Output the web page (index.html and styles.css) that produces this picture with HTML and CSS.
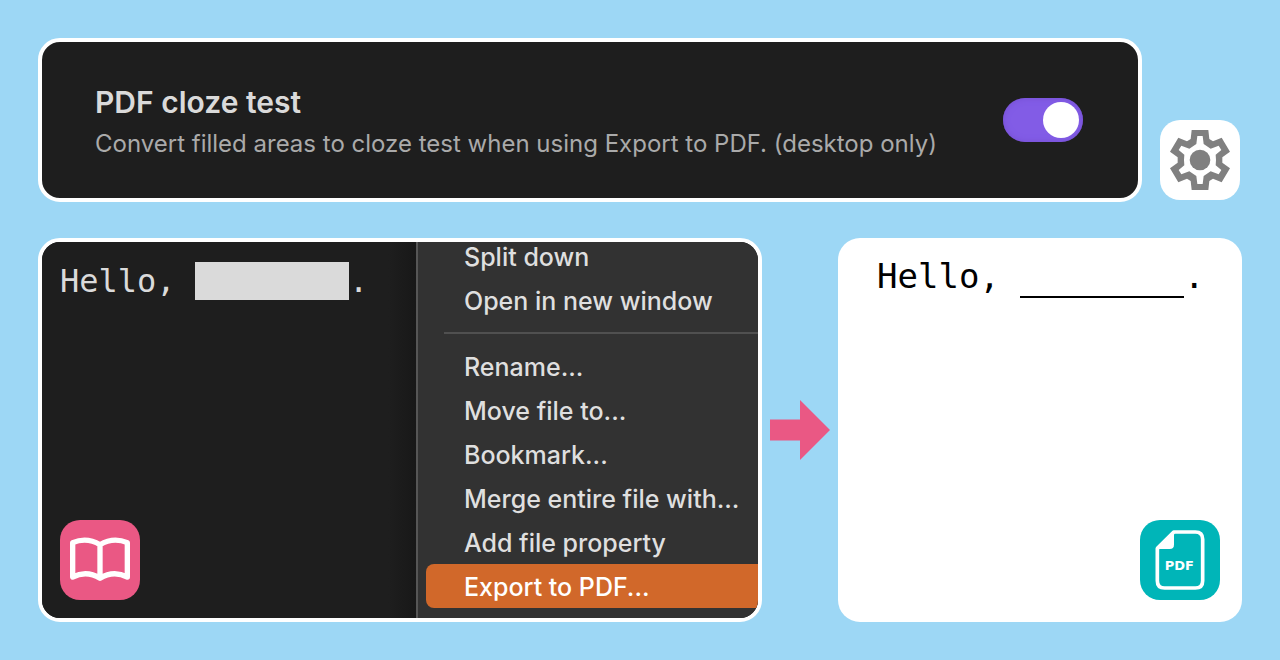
FILE: index.html
```html
<!DOCTYPE html>
<html lang="en">
<head>
<meta charset="utf-8">
<meta name="viewport" content="width=device-width, initial-scale=1">
<title>PDF cloze test</title>
<link rel="stylesheet" href="styles.css">
</head>
<body class="page">
<section class="settings-row">
  <div class="card setting">
    <div class="setting-text">
      <label class="setting-title" for="cloze">PDF cloze test</label>
      <p class="setting-desc" id="cloze-desc">Convert filled areas to cloze test when using Export to PDF. (desktop only)</p>
    </div>
    <input class="toggle" type="checkbox" role="switch" id="cloze" aria-describedby="cloze-desc" checked>
  </div>
  <div class="tile tile-gear">
    <svg class="icon" viewBox="30 30 240 240" aria-hidden="true">
      <path fill="#808080" fill-rule="evenodd" d="M125 60H175L178 87L189 94L215 83L240 125L217 142V158L240 175L215 217L189 206L178 213L175 240H125L122 213L111 206L85 217L60 175L83 158V142L60 125L85 83L111 94L122 87ZM142 78L139 102L118 116L94 107L86 120L103 134Q101 150 103 166L86 180L94 193L118 184L139 198L142 222H158L161 198L182 184L206 193L214 180L197 166Q199 150 197 134L214 120L206 107L182 116L161 102L158 78Z"/>
      <circle cx="150" cy="150" r="31" fill="#808080"/>
    </svg>
  </div>
</section>
<main class="flow">
  <section class="card workspace">
    <div class="editor">
      <p class="note">Hello, <span class="filled">________</span>.</p>
      <div class="tile tile-book">
        <svg class="icon" viewBox="60 60 240 240" aria-hidden="true">
          <path fill="none" stroke="#fff" stroke-width="16" stroke-linejoin="round" d="M98 128Q140 110 180 134Q220 110 262 128V231Q220 210 180 235Q140 210 98 231ZM180 134V235"/>
        </svg>
      </div>
    </div>
    <div class="menu">
      <button class="menu-item menu-item-first" type="button">Split down</button>
      <button class="menu-item" type="button">Open in new window</button>
      <hr class="menu-line">
      <button class="menu-item" type="button">Rename...</button>
      <button class="menu-item" type="button">Move file to...</button>
      <button class="menu-item" type="button">Bookmark...</button>
      <button class="menu-item" type="button">Merge entire file with...</button>
      <button class="menu-item" type="button">Add file property</button>
      <button class="menu-item menu-item-active" type="button">Export to PDF...</button>
    </div>
  </section>
  <svg class="arrow" viewBox="0 0 60 60" aria-hidden="true"><path fill="#ea5884" d="M0 19.500H30V0L60 30L30 60V40.500H0Z"/></svg>
  <section class="output">
    <p class="note note-print">Hello, <span class="blank">________</span>.</p>
    <div class="tile tile-pdf">
      <svg class="icon" viewBox="60 60 240 240" aria-hidden="true">
        <path fill="none" stroke="#fff" stroke-width="11" stroke-linejoin="round" d="M162 96H226Q248 96 248 118V242Q248 264 226 264H134Q112 264 112 242V146Z"/>
        <path fill="#fff" d="M108 142L158 92H162V134Q162 147 149 147H108Z"/>
        <text class="pdf-word" x="178" y="210" text-anchor="middle">PDF</text>
      </svg>
    </div>
  </section>
</main>
</body>
</html>
```
FILE: styles.css
```css
* { box-sizing: border-box; }

.page {
  margin: 0;
  min-height: 100vh;
  padding: 38px;
  display: flex;
  flex-direction: column;
  gap: 36px;
  background: #9dd7f5;
  font-family: Inter, "Liberation Sans", sans-serif;
}

.card {
  border: 4px solid #fff;
  border-radius: 22px;
  background: #1e1e1e;
  overflow: hidden;
}

.settings-row {
  display: flex;
  align-items: flex-end;
  gap: 18px;
  padding-right: 2px;
}

.setting {
  flex: 1;
  display: flex;
  align-items: center;
  justify-content: space-between;
  gap: 32px;
  padding: 40px 55px 36px 53px;
}

.setting-title {
  display: block;
  color: #dadada;
  font-size: 30px;
  font-weight: 600;
  line-height: 40px;
}

.setting-desc {
  margin: 4px 0 0;
  color: #aaa;
  font-size: 24px;
  line-height: 36px;
}

.toggle {
  appearance: none;
  flex: none;
  display: flex;
  justify-content: flex-end;
  width: 80px;
  height: 44px;
  margin: 0 0 4px;
  padding: 4px;
  border-radius: 22px;
  background: #825ce6;
  box-shadow: inset 0 0 6px #754fd2;
}

.toggle::before {
  content: "";
  width: 36px;
  height: 36px;
  border-radius: 50%;
  background: #fff;
}

.tile {
  flex: none;
  width: 80px;
  height: 80px;
  border-radius: 20px;
}

.icon { display: block; width: 100%; height: 100%; }

.tile-gear { background: #fff; margin-bottom: 2px; }
.tile-book { background: #ea5884; }
.tile-pdf { background: #00b5b8; align-self: flex-end; }

.pdf-word {
  fill: #fff;
  font-family: "DejaVu Sans", sans-serif;
  font-size: 39px;
  font-weight: 700;
}

.flow {
  flex: 1;
  display: grid;
  grid-template-columns: 724fr 60px 404fr;
  gap: 8px;
  align-items: stretch;
}

.workspace {
  display: grid;
  grid-template-columns: 374fr 342fr;
}

.editor {
  display: flex;
  flex-direction: column;
  justify-content: space-between;
  padding: 20px 18px 18px;
  background: linear-gradient(to left, #181818, #1e1e1e 28px);
}

.note {
  margin: 0;
  color: #dadada;
  font-family: "DejaVu Sans Mono", monospace;
  font-size: 32px;
  line-height: 38px;
  white-space: nowrap;
}

.filled { background: #dadada; color: transparent; }

.menu {
  display: flex;
  flex-direction: column;
  padding: 0 0 10px 8px;
  border-left: 2px solid #565656;
  background: #323232;
}

.menu-item {
  padding: 2px 0 0 38px;
  border: 0;
  border-radius: 8px 0 0 8px;
  background: none;
  color: #dfdfdf;
  font-family: inherit;
  font-size: 25px;
  font-weight: 500;
  line-height: 42px;
  text-align: left;
  white-space: nowrap;
}

.menu-item-first {
  padding-top: 0;
  padding-bottom: 6px;
  line-height: 30px;
}

.menu-item-active { background: #d1682a; color: #fff; }

.menu-line {
  width: auto;
  height: 2px;
  margin: 10px 0 10px 18px;
  border: 0;
  background: #505050;
}

.arrow { align-self: center; width: 60px; height: 60px; }

.output {
  display: flex;
  flex-direction: column;
  justify-content: space-between;
  padding: 19px 22px 22px 39px;
  border-radius: 22px;
  background: #fff;
}

.note-print { color: #000; font-size: 34px; }

.blank {
  color: transparent;
  border-bottom: 2px solid #000;
}
```
